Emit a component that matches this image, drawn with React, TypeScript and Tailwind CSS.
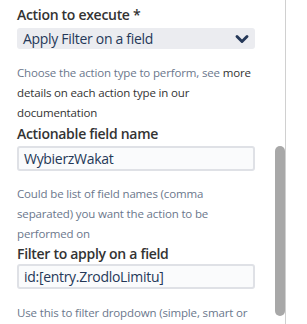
import { ChevronDown } from "lucide-react";

export default function App() {
  return (
    <div className="flex h-[324px] w-[307px] overflow-hidden bg-white font-['Open_Sans',sans-serif]">
      <div className="flex w-[275px] flex-col pl-[17px] pr-[20px] pt-[5px]">
        <label className="text-[14px] font-semibold leading-[20px] tracking-[-0.3px] text-[#333333]">Action to execute *</label>
        <div className="mt-[3px] flex h-[29px] items-center justify-between rounded-[3px] bg-[#ebecf0] pl-[6px] pr-[3px]">
          <span className="text-[14px] tracking-[-0.3px] text-[#253858]">Apply Filter on a field</span>
          <ChevronDown className="h-[20px] w-[20px] text-[#253858]" strokeWidth={3.5} />
        </div>
        <p className="mt-[14px] text-[11.5px] leading-[20px] tracking-[-0.15px] text-[#6b778c]">
          Choose the action type to perform, see <span className="text-[#333333]">more details on each action type in our documentation</span>
        </p>

        <label className="mt-[1px] text-[14px] font-semibold leading-[20px] tracking-[-0.3px] text-[#333333]">Actionable field name</label>
        <div className="mt-[2px] flex h-[28px] items-center rounded-[3px] border-2 border-[#dfe1e6] bg-[#fafbfc] px-[5px]">
          <span className="text-[14px] tracking-[-0.3px] text-[#253858]">WybierzWakat</span>
        </div>
        <p className="mt-[13px] text-[11.5px] leading-[20px] tracking-[-0.15px] text-[#6b778c]">
          Could be list of field names (comma separated) you want the action to be performed on
        </p>

        <label className="text-[14px] font-semibold leading-[20px] tracking-[-0.3px] text-[#333333]">Filter to apply on a field</label>
        <div className="flex h-[28px] items-center rounded-[3px] border-2 border-[#dfe1e6] bg-[#fafbfc] px-[5px]">
          <span className="text-[14px] tracking-[-0.3px] text-[#253858]">id:[entry.ZrodloLimitu]</span>
        </div>
        <p className="mt-[14px] text-[11.5px] leading-[20px] tracking-[-0.15px] text-[#6b778c]">
          Use this to filter dropdown (simple, smart or db) field choices. Filter is applied on a
        </p>
      </div>
      <div className="relative w-[10px]">
        <div className="absolute left-0 top-[146px] h-[170px] w-[10px] rounded-[5px] bg-[#a8a8a8]" />
      </div>
      <div className="w-px bg-[#d0d0d0]" />
    </div>
  );
}
